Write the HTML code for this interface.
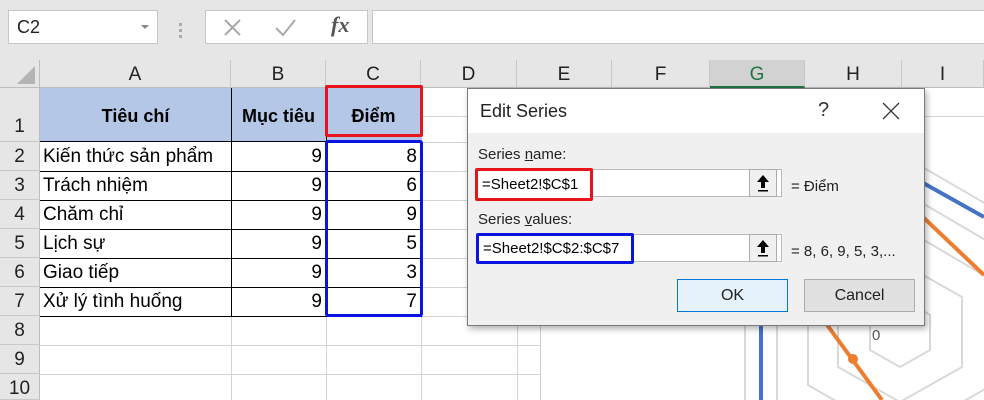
<!DOCTYPE html>
<html><head><meta charset="utf-8"><style>
*{margin:0;padding:0;box-sizing:border-box}
html,body{width:984px;height:400px;overflow:hidden}
body{position:relative;background:#fff;font-family:"Liberation Sans",sans-serif}
.a{position:absolute}
.top{left:0;top:0;width:984px;height:60px;background:#e6e6e6}
.box{background:#fff;border:1px solid #c6c6c6}
.ch{top:60px;height:28px;background:#e6e6e6;border-right:1px solid #c8c8c8;border-bottom:1px solid #bdbdbd;font-size:19px;color:#222;text-align:center;line-height:30px}
.rh{left:0;width:40px;background:#e6e6e6;border-bottom:1px solid #c8c8c8;border-right:1px solid #bdbdbd;font-size:19px;color:#222;text-align:center}
.c{font-size:19px;color:#000;white-space:nowrap;line-height:29px}
.up{position:absolute;width:28px;height:28px;background:#f0f0f0;border:1px solid #adadad}
</style></head><body>
<div class="a top"></div>
<div class="a box" style="left:8px;top:10px;width:150px;height:34px;font-size:18px;padding:6px 0 0 8px;color:#222">C2<span style="position:absolute;left:132px;top:14px;width:0;height:0;border-left:4px solid transparent;border-right:4px solid transparent;border-top:4px solid #888"></span></div>
<div class="a" style="left:179px;top:23px;width:3px;height:3px;background:#aaa;box-shadow:0 6px #aaa,0 12px #aaa"></div>
<div class="a box" style="left:205px;top:10px;width:163px;height:34px"></div>
<svg class="a" style="left:205px;top:10px" width="163" height="34"><g stroke="#aaa" stroke-width="2" fill="none"><path d="M20 10 L35 25 M35 10 L20 25"/><path d="M71 18 L78 25 L90 10"/></g></svg>
<div class="a" style="left:331px;top:12px;font-size:22px;color:#555;font-style:italic;font-family:'Liberation Serif',serif;font-weight:bold">fx</div>
<div class="a box" style="left:372px;top:10px;width:620px;height:34px"></div>
<svg class="a" style="left:0;top:0" width="984" height="400">
<g stroke="#d4d4d4" stroke-width="1">
<line x1="40" y1="345.5" x2="540" y2="345.5"/><line x1="40" y1="374.5" x2="540" y2="374.5"/><line x1="40" y1="316.5" x2="540" y2="316.5"/>
<line x1="421.5" y1="88" x2="421.5" y2="400"/><line x1="517.5" y1="88" x2="517.5" y2="400"/>
<line x1="231.5" y1="316" x2="231.5" y2="400"/><line x1="326.5" y1="316" x2="326.5" y2="400"/>
<line x1="421" y1="142.5" x2="540" y2="142.5"/><line x1="421" y1="171.5" x2="540" y2="171.5"/><line x1="421" y1="200.5" x2="540" y2="200.5"/><line x1="421" y1="229.5" x2="540" y2="229.5"/><line x1="421" y1="258.5" x2="540" y2="258.5"/><line x1="421" y1="287.5" x2="540" y2="287.5"/>
<line x1="420" y1="116.5" x2="984" y2="116.5"/>
</g>
</svg>
<div class="a" style="left:0;top:60px;width:40px;height:28px;background:#e6e6e6;border-right:1px solid #bdbdbd;border-bottom:1px solid #bdbdbd"></div>
<div class="a" style="left:17px;top:66px;width:0;height:0;border-left:18px solid transparent;border-bottom:18px solid #b4b4b4"></div>
<div class="a ch" style="left:40px;width:191px">A</div>
<div class="a ch" style="left:231px;width:95px">B</div>
<div class="a ch" style="left:326px;width:95px">C</div>
<div class="a ch" style="left:421px;width:96px">D</div>
<div class="a ch" style="left:517px;width:95px">E</div>
<div class="a ch" style="left:612px;width:98px">F</div>
<div class="a ch" style="left:710px;width:95px;background:#d2d2d2;color:#217346;border-bottom:2px solid #217346">G</div>
<div class="a ch" style="left:805px;width:97px">H</div>
<div class="a ch" style="left:902px;width:82px">I</div>
<div class="a rh" style="top:88px;height:54px;line-height:78px">1</div>
<div class="a rh" style="top:142px;height:29px;line-height:29px">2</div>
<div class="a rh" style="top:171px;height:29px;line-height:29px">3</div>
<div class="a rh" style="top:200px;height:29px;line-height:29px">4</div>
<div class="a rh" style="top:229px;height:29px;line-height:29px">5</div>
<div class="a rh" style="top:258px;height:29px;line-height:29px">6</div>
<div class="a rh" style="top:287px;height:29px;line-height:29px">7</div>
<div class="a rh" style="top:316px;height:29px;line-height:29px">8</div>
<div class="a rh" style="top:345px;height:29px;line-height:29px">9</div>
<div class="a rh" style="top:374px;height:26px;line-height:29px">10</div>
<div class="a" style="left:40px;top:88px;width:382px;height:54px;background:#b4c7e7;border-bottom:1px solid #000"></div>
<svg class="a" style="left:0;top:0" width="540" height="400"><g stroke="#000" stroke-width="1">
<line x1="40" y1="171.5" x2="422" y2="171.5"/><line x1="40" y1="200.5" x2="422" y2="200.5"/><line x1="40" y1="229.5" x2="422" y2="229.5"/><line x1="40" y1="258.5" x2="422" y2="258.5"/><line x1="40" y1="287.5" x2="422" y2="287.5"/><line x1="40" y1="316.5" x2="422" y2="316.5"/>
<line x1="231.5" y1="88" x2="231.5" y2="316"/><line x1="326.5" y1="88" x2="326.5" y2="316"/></g></svg>
<div class="a c" style="left:40px;top:102px;width:191px;text-align:center;font-weight:bold;font-size:18px">Tiêu chí</div>
<div class="a c" style="left:231px;top:102px;width:95px;text-align:center;font-weight:bold;font-size:18px">Mục tiêu</div>
<div class="a c" style="left:326px;top:102px;width:95px;text-align:center;font-weight:bold;font-size:18px">Điểm</div>
<div class="a c" style="left:43px;top:142px">Kiến thức sản phẩm</div>
<div class="a c" style="left:43px;top:171px">Trách nhiệm</div>
<div class="a c" style="left:43px;top:200px">Chăm chỉ</div>
<div class="a c" style="left:43px;top:229px">Lịch sự</div>
<div class="a c" style="left:43px;top:258px">Giao tiếp</div>
<div class="a c" style="left:43px;top:287px">Xử lý tình huống</div>
<div class="a c" style="left:231px;top:142px;width:91px;text-align:right;line-height:29px">9<br>9<br>9<br>9<br>9<br>9</div>
<div class="a c" style="left:326px;top:142px;width:91px;text-align:right;line-height:29px">8<br>6<br>9<br>5<br>3<br>7</div>
<div class="a" style="left:325px;top:85px;width:98px;height:52px;border:3px solid #e8141b;border-radius:2px"></div>
<div class="a" style="left:325px;top:140px;width:98px;height:177px;border:3px solid #0a14e0;border-radius:3px"></div>
<svg class="a" style="left:0;top:0" width="984" height="400">
<line x1="540.5" y1="116" x2="540.5" y2="400" stroke="#d0d0d0"/>
<g fill="none" stroke="#d9d9d9" stroke-width="2">
<polygon points="900,297 930,315 930,350 900,367 870,350 870,315"/>
<polygon points="900,262 962,297 962,367 900,402 838,367 838,297"/>
<polygon points="900,226 992,280 992,385 900,438 808,385 808,280"/>
<polygon points="900,190 1023,262 1023,402 900,474 777,402 777,262"/>
<polygon points="900,154 1055,244 1055,420 900,510 745,420 745,244"/>
</g>
<line x1="761" y1="320" x2="761" y2="400" stroke="#4472c4" stroke-width="4"/>
<line x1="900" y1="170" x2="984" y2="217" stroke="#4472c4" stroke-width="4"/>
<line x1="905" y1="200" x2="984" y2="275" stroke="#ed7d31" stroke-width="4"/>
<line x1="822" y1="318" x2="882" y2="400" stroke="#ed7d31" stroke-width="4"/>
<circle cx="853" cy="359" r="5" fill="#ed7d31"/>
<text x="872" y="340" font-size="15" fill="#595959" font-family="Liberation Sans">0</text>
</svg>
<div class="a" style="left:467px;top:88px;width:458px;height:238px;background:#f0f0f0;border:1px solid #7a7a7a;box-shadow:2px 3px 6px rgba(0,0,0,.3)">
<div class="a" style="left:0;top:0;width:456px;height:44px;background:#fff"></div>
<div class="a" style="left:12px;top:12px;font-size:18px;color:#222">Edit Series</div>
<div class="a" style="left:350px;top:10px;font-size:20px;color:#333">?</div>
<svg class="a" style="left:413px;top:12px" width="20" height="20"><path d="M2 2 L18 18 M18 2 L2 18" stroke="#333" stroke-width="1.3"/></svg>
<div class="a" style="left:10px;top:57px;font-size:15px;color:#222">Series <u>n</u>ame:</div>
<div class="a" style="left:9px;top:80px;width:305px;height:28px;background:#fff;border:1px solid #b9b9b9"></div>
<div class="up" style="left:281px;top:80px"><svg width="26" height="26"><path d="M13 5 L19 12 L15 12 L15 18 L11 18 L11 12 L7 12 Z" fill="#000"/><rect x="8" y="20" width="10" height="1.5" fill="#000"/></svg></div>
<div class="a" style="left:323px;top:89px;font-size:15px;color:#222">= Điểm</div>
<div class="a" style="left:7px;top:79px;width:118px;height:33px;border:3px solid #e8141b;border-radius:2px;background:#fff;font-size:15px;padding:5px 0 0 4px;color:#000">=Sheet2!$C$1</div>
<div class="a" style="left:10px;top:122px;font-size:15px;color:#222">Series <u>v</u>alues:</div>
<div class="a" style="left:9px;top:145px;width:305px;height:28px;background:#fff;border:1px solid #b9b9b9"></div>
<div class="up" style="left:281px;top:145px"><svg width="26" height="26"><path d="M13 5 L19 12 L15 12 L15 18 L11 18 L11 12 L7 12 Z" fill="#000"/><rect x="8" y="20" width="10" height="1.5" fill="#000"/></svg></div>
<div class="a" style="left:323px;top:154px;font-size:15px;color:#222">= 8, 6, 9, 5, 3,...</div>
<div class="a" style="left:8px;top:144px;width:158px;height:31px;border:3px solid #0a14e0;border-radius:2px;background:#fff;font-size:15px;padding:4px 0 0 4px;color:#000;white-space:nowrap">=Sheet2!$C$2:$C$7</div>
<div class="a" style="left:209px;top:190px;width:111px;height:33px;background:#e5f1fb;border:1px solid #0078d7;text-align:center;line-height:31px;font-size:16px;color:#222">OK</div>
<div class="a" style="left:336px;top:190px;width:111px;height:33px;background:#e1e1e1;border:1px solid #adadad;text-align:center;line-height:31px;font-size:16px;color:#222">Cancel</div>
</div>
</body></html>
